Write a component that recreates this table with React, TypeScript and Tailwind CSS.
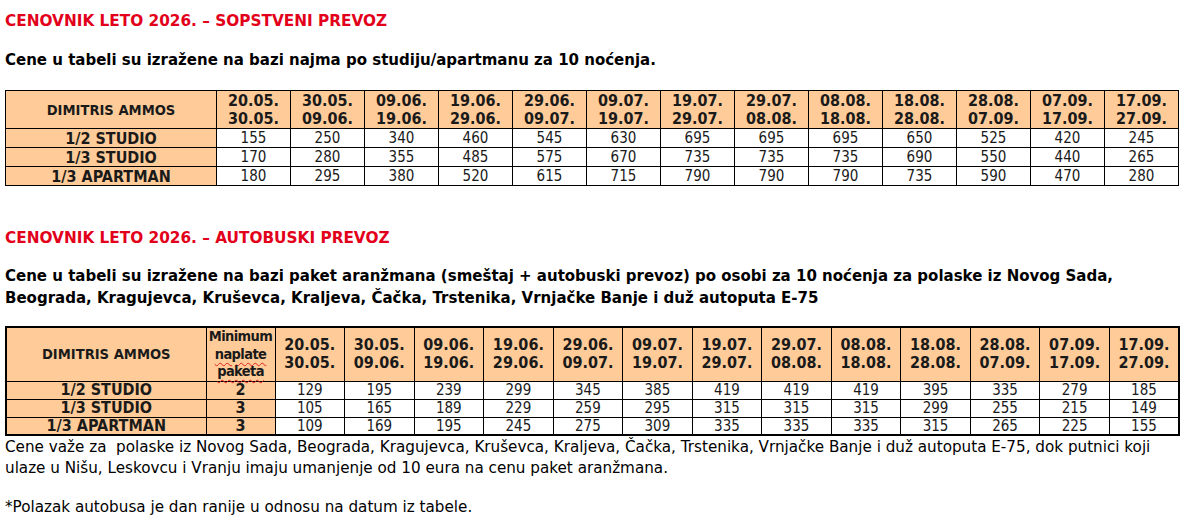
import React from "react";

const dates: [string, string][] = [
  ["20.05.", "30.05."],
  ["30.05.", "09.06."],
  ["09.06.", "19.06."],
  ["19.06.", "29.06."],
  ["29.06.", "09.07."],
  ["09.07.", "19.07."],
  ["19.07.", "29.07."],
  ["29.07.", "08.08."],
  ["08.08.", "18.08."],
  ["18.08.", "28.08."],
  ["28.08.", "07.09."],
  ["07.09.", "17.09."],
  ["17.09.", "27.09."],
];

const t1: [string, number[]][] = [
  ["1/2 STUDIO", [155, 250, 340, 460, 545, 630, 695, 695, 695, 650, 525, 420, 245]],
  ["1/3 STUDIO", [170, 280, 355, 485, 575, 670, 735, 735, 735, 690, 550, 440, 265]],
  ["1/3 APARTMAN", [180, 295, 380, 520, 615, 715, 790, 790, 790, 735, 590, 470, 280]],
];

const t2: [string, number, number[]][] = [
  ["1/2 STUDIO", 2, [129, 195, 239, 299, 345, 385, 419, 419, 419, 395, 335, 279, 185]],
  ["1/3 STUDIO", 3, [105, 165, 189, 229, 259, 295, 315, 315, 315, 299, 255, 215, 149]],
  ["1/3 APARTMAN", 3, [109, 169, 195, 245, 275, 309, 335, 335, 335, 315, 265, 225, 155]],
];

const tah = "font-['DejaVu_Sans_Condensed','DejaVu_Sans',sans-serif]";

export default function App() {
  return (
    <div className="bg-white w-[1182px] h-[525px] overflow-hidden px-[5px] text-black font-['DejaVu_Sans','Verdana',sans-serif]">
      <h1 className="mt-[12px] text-[15.3px] leading-[18px] font-bold text-[#e2001a]">
        CENOVNIK LETO 2026. – SOPSTVENI PREVOZ
      </h1>
      <p className="mt-[21px] text-[15px] leading-[18px] font-bold">
        Cene u tabeli su izražene na bazi najma po studiju/apartmanu za 10 noćenja.
      </p>

      <table className={`mt-[21px] w-[1174px] table-fixed border-collapse border border-black ${tah} text-[#1a1a1a]`}>
        <colgroup>
          <col className="w-[211px]" />
          {dates.map((_, i) => (
            <col key={i} />
          ))}
        </colgroup>
        <thead>
          <tr className="h-[38px] bg-[#ffcc99]">
            <th className="border border-black p-0 text-[14.6px] font-bold">DIMITRIS AMMOS</th>
            {dates.map(([a, b], i) => (
              <th key={i} className="border border-black p-0 text-[16px] leading-[18px] font-bold">
                {a}
                <br />
                {b}
              </th>
            ))}
          </tr>
        </thead>
        <tbody>
          {t1.map(([label, vals], r) => (
            <tr key={r} className="h-[19px]">
              <td className="border border-black p-0 bg-[#ffcc99] text-center text-[16px] leading-[17px] font-bold">
                {label}
              </td>
              {vals.map((v, i) => (
                <td key={i} className="border border-black p-0 text-center text-[15px] leading-[17px]">
                  {v}
                </td>
              ))}
            </tr>
          ))}
        </tbody>
      </table>

      <h2 className="mt-[43px] text-[15.3px] leading-[18px] font-bold text-[#e2001a]">
        CENOVNIK LETO 2026. – AUTOBUSKI PREVOZ
      </h2>
      <p className="mt-[18px] text-[15px] leading-[22px] font-bold w-[1172px]">
        Cene u tabeli su izražene na bazi paket aranžmana (smeštaj + autobuski prevoz) po osobi za 10 noćenja za
        polaske iz Novog Sada, Beograda, Kragujevca, Kruševca, Kraljeva, Čačka, Trstenika, Vrnjačke Banje i duž
        autoputa E-75
      </p>

      <table className={`mt-[17px] w-[1175px] table-fixed border-collapse border-2 border-black ${tah} text-[#1a1a1a]`}>
        <colgroup>
          <col className="w-[200px]" />
          <col className="w-[69px]" />
          {dates.map((_, i) => (
            <col key={i} />
          ))}
        </colgroup>
        <thead>
          <tr className="h-[52px] bg-[#ffcc99]">
            <th className="border border-black p-0 text-[14.6px] font-bold">DIMITRIS AMMOS</th>
            <th className="border border-black p-0 text-[14.5px] leading-[17.5px] font-bold tracking-[-0.6px]">
              Minimum
              <br />
              <span className="underline decoration-wavy decoration-[#e02020] decoration-1 underline-offset-[3px]">naplate</span>
              <br />
              <span className="underline decoration-wavy decoration-[#e02020] decoration-1 underline-offset-[3px]">paketa</span>
            </th>
            {dates.map(([a, b], i) => (
              <th key={i} className="border border-black p-0 text-[16px] leading-[18px] font-bold">
                {a}
                <br />
                {b}
              </th>
            ))}
          </tr>
        </thead>
        <tbody>
          {t2.map(([label, min, vals], r) => (
            <tr key={r} className="h-[18px]">
              <td className="border border-black p-0 bg-[#ffcc99] text-center text-[16px] leading-[16px] font-bold">
                {label}
              </td>
              <td className="border border-black p-0 bg-[#ffcc99] text-center text-[16px] leading-[16px] font-bold">
                {min}
              </td>
              {vals.map((v, i) => (
                <td key={i} className="border border-black p-0 text-center text-[15px] leading-[16px]">
                  {v}
                </td>
              ))}
            </tr>
          ))}
        </tbody>
      </table>

      <p className="mt-[1px] text-[15.2px] leading-[21px] w-[1172px]">
        Cene važe za{"\u00a0"} polaske iz Novog Sada, Beograda, Kragujevca, Kruševca, Kraljeva, Čačka, Trstenika, Vrnjačke
        Banje i duž autoputa E-75, dok putnici koji ulaze u Nišu, Leskovcu i Vranju imaju umanjenje od 10 eura na cenu
        paket aranžmana.
      </p>
      <p className="mt-[18px] text-[15.2px] leading-[21px]">*Polazak autobusa je dan ranije u odnosu na datum iz tabele.</p>
    </div>
  );
}
